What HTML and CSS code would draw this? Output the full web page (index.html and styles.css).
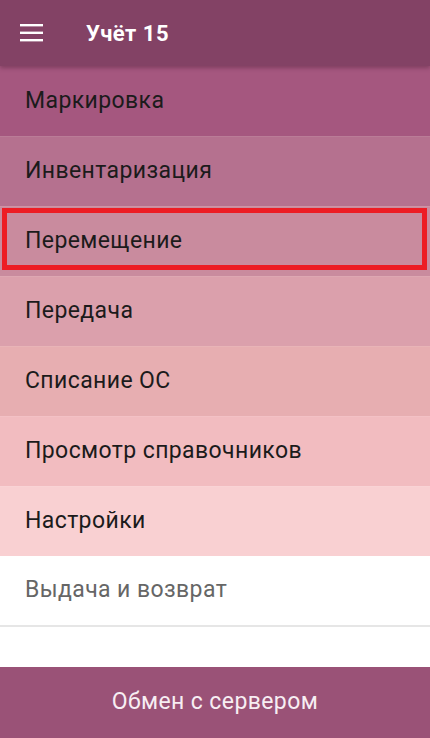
FILE: index.html
```html
<!DOCTYPE html>
<html lang="ru">
<head>
<meta charset="utf-8">
<title>Учёт 15</title>
<link rel="stylesheet" href="styles.css">
</head>
<body>
<div class="app">
  <header class="topbar">
    <svg class="menu-icon" width="24" height="18" viewBox="0 0 24 18" aria-hidden="true">
      <rect x="0" y="0" width="23" height="2.4" fill="#fff"/>
      <rect x="0" y="7.6" width="23" height="2.4" fill="#fff"/>
      <rect x="0" y="15" width="23" height="2.4" fill="#fff"/>
    </svg>
    <h1 class="title">Учёт 15</h1>
  </header>
  <nav class="menu">
    <div class="item c1">Маркировка</div>
    <div class="item c2">Инвентаризация</div>
    <div class="item c3 highlighted">Перемещение</div>
    <div class="item c4">Передача</div>
    <div class="item c5">Списание ОС</div>
    <div class="item c6">Просмотр справочников</div>
    <div class="item c7">Настройки</div>
    <div class="item c8">Выдача и возврат</div>
  </nav>
  <div class="spacer"></div>
  <button class="sync">Обмен с сервером</button>
</div>
</body>
</html>
```

FILE: styles.css
```css
* { box-sizing: border-box; }
html, body { margin: 0; padding: 0; }
body {
  font-family: Roboto, "Noto Sans", "Liberation Sans", sans-serif;
  background: #fff;
}
.app {
  width: 430px;
  height: 738px;
  display: flex;
  flex-direction: column;
  overflow: hidden;
}
.topbar {
  height: 66px;
  flex: 0 0 66px;
  background: #834265;
  display: flex;
  align-items: center;
  padding-left: 20px;
  position: relative;
  z-index: 2;
  box-shadow: 0 2px 4px rgba(60, 20, 40, 0.35);
}
.menu-icon { display: block; margin-top: -1px; }
.title {
  margin: 0 0 0 42px;
  color: #fff;
  font-size: 22px;
  font-weight: 700;
  letter-spacing: 0.5px;
}
.menu { display: flex; flex-direction: column; }
.item {
  height: 70px;
  display: flex;
  align-items: center;
  padding-left: 25px;
  padding-bottom: 2px;
  font-size: 23px;
  letter-spacing: 0.4px;
  color: #1b1b1b;
  border-top: 1px solid rgba(255, 255, 255, 0.08);
  position: relative;
}
.c1 { background: #a5577f; border-top: none; }
.c2 { background: #b5718f; }
.c3 { background: #c98b9e; }
.c4 { background: #dba0ac; }
.c5 { background: #e7aeb1; }
.c6 { background: #f2bcc0; }
.c7 { background: #f9d0d2; }
.c8 {
  background: #fff;
  color: #666;
  height: 71px;
  border-top: none;
  border-bottom: 2px solid #e6e6e6;
}
.highlighted::after {
  content: "";
  position: absolute;
  left: 2px;
  right: 3px;
  top: 1px;
  bottom: 6px;
  border: 5px solid #ed1c24;
}
.spacer { flex: 1 1 auto; }
.sync {
  height: 71px;
  flex: 0 0 71px;
  border: none;
  background: #9a5277;
  color: #f7eef3;
  font-family: Roboto, "Noto Sans", "Liberation Sans", sans-serif;
  font-size: 23px;
  letter-spacing: 0.4px;
  padding: 0 0 2px 0;
  width: 100%;
}
```
